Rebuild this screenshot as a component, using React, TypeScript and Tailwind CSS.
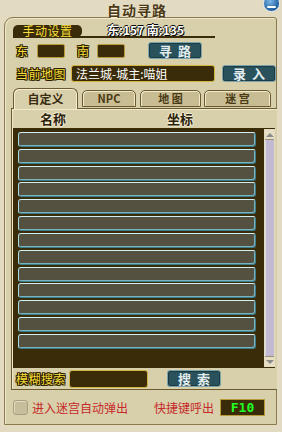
import React from "react";

const OUTLINE_DARK =
  "[text-shadow:1px_0_0_#2a1e00,-1px_0_0_#2a1e00,0_1px_0_#2a1e00,0_-1px_0_#2a1e00,1px_1px_0_#2a1e00,-1px_-1px_0_#2a1e00,1px_-1px_0_#2a1e00,-1px_1px_0_#2a1e00]";
const OUTLINE_BLACK =
  "[text-shadow:1px_1px_0_#000,-1px_0_0_#000,0_-1px_0_#000]";
const OUTLINE_LIGHT =
  "[text-shadow:1px_0_0_#f3ecd4,-1px_0_0_#f3ecd4,0_1px_0_#f3ecd4,0_-1px_0_#f3ecd4]";

const FONT = "font-['Noto_Sans_CJK_SC','Noto_Sans',sans-serif]";

function TealButton({ label, className = "" }: { label: string; className?: string }) {
  return (
    <div
      className={`h-[17px] w-[54px] rounded-[3px] border border-[#7aa3ab] bg-[#29525c] shadow-[inset_0_0_0_1px_#1c3a42] flex items-center justify-center text-[13px] font-bold leading-none tracking-[6px] pl-[6px] text-[#e4eef0] ${className}`}
    >
      {label}
    </div>
  );
}

function DarkBox({ className = "", children }: { className?: string; children?: React.ReactNode }) {
  return (
    <div className={`rounded-[2px] border border-[#b89a3a] bg-[#3a2c08] ${className}`}>{children}</div>
  );
}

const TABS = [
  { label: "NPC", w: "w-[54px]", ml: "ml-[4px]" },
  { label: "地 图", w: "w-[61px]", ml: "ml-[4px]" },
  { label: "迷 宫", w: "w-[67px]", ml: "ml-[3px]" },
];

export default function App() {
  const rows = Array.from({ length: 13 });
  return (
    <div className={`relative w-[282px] h-[432px] overflow-hidden bg-[#e2dbc2] ${FONT}`}>
      {/* Title bar */}
      <div className="relative z-10 h-[21px] flex items-start justify-center pr-[8px]">
        <span className="text-[14px] font-bold leading-[21px] tracking-[1px] text-[#4a3816] [text-shadow:0_1px_0_#f6f0da]">
          自动寻路
        </span>
      </div>

      {/* Close button */}
      <div className="absolute z-20 right-[2px] top-[-5px] w-[17px] h-[17px] rounded-full border border-[#dfe8f0] bg-[radial-gradient(circle_at_40%_35%,#7ab8e8,#1e5c9c_70%)] flex items-center justify-center pt-[6px]">
        <div className="w-[9px] h-[2px] bg-white rounded-[1px]" />
      </div>

      {/* Main panel */}
      <div className="-mt-[4px] ml-[4px] w-[273px] h-[408px] rounded-tl-[9px] rounded-tr-[3px] border border-[#8c7b4e] bg-[#d8cfab] shadow-[inset_1px_1px_0_#efe7cc]">
        {/* Manual setting row */}
        <div className="mt-[7px] ml-[8px] w-[202px] h-[13px] border-b-2 border-[#3a2c08] flex items-start">
          <div className="h-[12px] w-[69px] rounded-t-[5px] rounded-br-[5px] bg-[#3a2c08] flex items-center justify-center text-[12px] leading-none tracking-[0.5px] text-[#f7de3a]">
            手动设置
          </div>
          <span className={`ml-[25px] -mt-px text-[12px] font-bold leading-[12px] text-white whitespace-pre ${OUTLINE_BLACK}`}>
            东:157 南:135
          </span>
        </div>

        {/* East / South row */}
        <div className="mt-[4px] h-[17px] flex items-center">
          <span className={`ml-[11px] text-[12px] leading-none text-[#f7de3a] ${OUTLINE_DARK}`}>东</span>
          <DarkBox className="ml-[9px] w-[28px] h-[14px]" />
          <span className={`ml-[12px] text-[12px] leading-none text-[#f7de3a] ${OUTLINE_DARK}`}>南</span>
          <DarkBox className="ml-[8px] w-[28px] h-[14px]" />
          <TealButton label="寻路" className="ml-[23px]" />
        </div>

        {/* Current map row */}
        <div className="mt-[6px] h-[17px] flex items-center">
          <span className={`ml-[11px] text-[12px] leading-none tracking-[0.5px] text-[#f7de3a] ${OUTLINE_DARK}`}>
            当前地图
          </span>
          <DarkBox className="ml-[5px] w-[144px] h-[17px] rounded-[3px] border-[#d4b440] flex items-center pl-[4px]">
            <span className="text-[12px] leading-none text-white">法兰城-城主:喵姐</span>
          </DarkBox>
          <TealButton label="录入" className="ml-[7px] w-[51px]" />
        </div>

        {/* Tabs */}
        <div className="mt-[6px] ml-[8px] h-[20px] flex items-end relative z-10">
          <div className="-mb-px h-[21px] w-[65px] rounded-t-[6px] border border-b-0 border-[#6b5a30] bg-[#d8cfab] shadow-[inset_1px_1px_0_#f6eed4,inset_-1px_0_0_#f6eed4] flex items-center justify-center text-[12px] font-bold leading-none text-[#3a2c10]">
            自定义
          </div>
          {TABS.map((t) => (
            <div
              key={t.label}
              className={`${t.ml} ${t.w} mb-px h-[17px] rounded-t-[5px] border border-[#6b5a30] bg-[#c8bc92] shadow-[inset_1px_1px_0_#f1e9cc,inset_-1px_0_0_#f1e9cc] flex items-center justify-center text-[11px] font-bold leading-none text-[#4a3a14]`}
            >
              {t.label}
            </div>
          ))}
        </div>

        {/* Tab content */}
        <div className="ml-[6px] w-[266px] h-[282px] border border-r-0 border-[#6b5a30] bg-[#d8cfab] shadow-[inset_1px_1px_0_#f1e9cc] flex flex-col">
          {/* Header */}
          <div className="h-[19px] flex items-center text-[13px] font-bold leading-none text-[#2c220a]">
            <span className={`ml-[28px] ${OUTLINE_LIGHT}`}>名称</span>
            <span className={`ml-[101px] ${OUTLINE_LIGHT}`}>坐标</span>
          </div>

          {/* List */}
          <div className="ml-px w-[262px] h-[240px] bg-[#3a2c08] flex">
            <div className="pl-[5px] pt-[4px] w-[249px] h-[221px] flex flex-col justify-between">
              {rows.map((_, i) => (
                <div
                  key={i}
                  className="h-[15px] w-[238px] rounded-[3px] border border-[#3d7c8a] border-t-[#d2f0f4] border-l-[#a6d8e2] bg-[#555141] shadow-[inset_-1px_-1px_0_#78b4c0]"
                />
              ))}
            </div>
            <div className="ml-[2px] mt-px w-[11px] h-[238px] border border-[#e4dcc0] bg-[#c2bad2] shadow-[inset_1px_0_0_#ddd8e8] flex flex-col justify-between">
              <div className="h-[10px] bg-[#e6dfc6] border-b border-[#9a9070] flex items-center justify-center">
                <div className="w-0 h-0 border-l-[4px] border-r-[4px] border-b-[4px] border-l-transparent border-r-transparent border-b-[#8a8a8a]" />
              </div>
              <div className="h-[10px] bg-[#e6dfc6] border-t border-[#9a9070] flex items-center justify-center">
                <div className="w-0 h-0 border-l-[4px] border-r-[4px] border-t-[4px] border-l-transparent border-r-transparent border-t-[#8a8a8a]" />
              </div>
            </div>
          </div>

          {/* Fuzzy search */}
          <div className="h-[21px] flex items-center">
            <span className={`ml-[4px] text-[12px] leading-none tracking-[0.5px] text-[#f7de3a] ${OUTLINE_DARK}`}>
              模糊搜索
            </span>
            <DarkBox className="ml-[3px] w-[79px] h-[18px] rounded-[3px] border-[#d4b440]" />
            <TealButton label="搜索" className="ml-[19px]" />
          </div>
        </div>

        {/* Bottom row */}
        <div className="mt-[9px] h-[17px] flex items-center">
          <div className="ml-[8px] w-[15px] h-[15px] rounded-[3px] border border-[#a89e80] bg-[#c6bd9c] shadow-[inset_1px_1px_0_#e4dcc0]" />
          <span className="ml-[4px] text-[12px] leading-none text-[#c62a2a]">进入迷宫自动弹出</span>
          <span className="ml-[26px] text-[12px] leading-none text-[#c62a2a]">快捷键呼出</span>
          <div className="ml-[6px] w-[45px] h-[17px] border border-[#b89a3a] bg-[#3a2c08] flex items-center justify-center">
            <span className="font-['DejaVu_Sans_Mono',monospace] text-[13px] font-bold leading-none text-[#22ff22]">
              F10
            </span>
          </div>
        </div>
      </div>
    </div>
  );
}
